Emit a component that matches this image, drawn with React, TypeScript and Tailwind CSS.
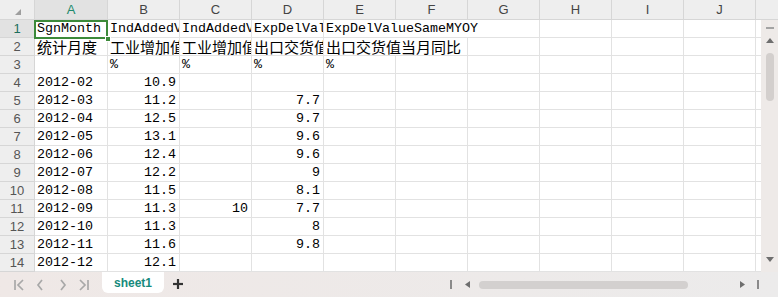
import React from "react";

type Cell = { t?: string; r?: boolean; cjk?: boolean; ov?: boolean; nb?: boolean };

const mono = { fontFamily: '"Liberation Mono", monospace' };

const rows: Cell[][] = [
  [
    { t: "SgnMonth" },
    { t: "IndAddedValueSameMYOY" },
    { t: "IndAddedValueAccumYOY" },
    { t: "ExpDelValueAccumYOY" },
    { t: "ExpDelValueSameMYOY", ov: true, nb: true },
    { nb: true },
    {}, {}, {}, {},
  ],
  [
    { t: "统计月度", cjk: true },
    { t: "工业增加值当月同比", cjk: true },
    { t: "工业增加值累计同比", cjk: true },
    { t: "出口交货值累计同比", cjk: true },
    { t: "出口交货值当月同比", cjk: true, ov: true, nb: true },
    {}, {}, {}, {}, {},
  ],
  [{}, { t: "%" }, { t: "%" }, { t: "%" }, { t: "%" }, {}, {}, {}, {}, {}],
];

const data: [string, string, string, string][] = [
  ["2012-02", "10.9", "", ""],
  ["2012-03", "11.2", "", "7.7"],
  ["2012-04", "12.5", "", "9.7"],
  ["2012-05", "13.1", "", "9.6"],
  ["2012-06", "12.4", "", "9.6"],
  ["2012-07", "12.2", "", "9"],
  ["2012-08", "11.5", "", "8.1"],
  ["2012-09", "11.3", "10", "7.7"],
  ["2012-10", "11.3", "", "8"],
  ["2012-11", "11.6", "", "9.8"],
  ["2012-12", "12.1", "", ""],
];

data.forEach(([a, b, c, d]) => {
  rows.push([
    { t: a },
    { t: b, r: true },
    { t: c, r: true },
    { t: d, r: true },
    {}, {}, {}, {}, {}, {},
  ]);
});

const cols = ["A", "B", "C", "D", "E", "F", "G", "H", "I", "J"];

function CellView({ c, first }: { c: Cell; first: boolean }) {
  const w = first ? "w-[73px]" : "w-[72px]";
  return (
    <div
      className={`${w} h-full shrink-0 border-b border-[#e2e2e2] ${
        c.nb ? "" : "border-r"
      } ${c.ov ? "relative z-10 overflow-visible" : "overflow-hidden"}`}
    >
      {c.t ? (
        <div
          className={`whitespace-nowrap text-black ${
            c.r ? "text-right pr-[3px]" : "pl-[2px]"
          } ${c.cjk ? "text-[15px] leading-[17px]" : "text-[13.33px] leading-[17px]"}`}
          style={
            c.cjk
              ? { fontFamily: '"Noto Sans CJK SC", sans-serif' }
              : mono
          }
        >
          {c.t}
        </div>
      ) : null}
    </div>
  );
}

function Tri({ up }: { up?: boolean }) {
  return (
    <svg width="8" height="5" viewBox="0 0 8 5">
      {up ? (
        <polygon points="4,0 8,5 0,5" fill="#6e6e6e" />
      ) : (
        <polygon points="0,0 8,0 4,5" fill="#6e6e6e" />
      )}
    </svg>
  );
}

export default function App() {
  const sans = { fontFamily: '"Liberation Sans", Arial, sans-serif' };
  return (
    <div className="w-[778px] h-[297px] bg-white overflow-hidden flex flex-col select-none" style={sans}>
      {/* column header */}
      <div className="flex h-[20px] shrink-0 bg-[#eeeeee] border-b border-[#d6d6d6]">
        <div className="w-[35px] shrink-0 border-r border-[#d6d6d6] relative">
          <svg className="absolute left-[15px] top-[9px]" width="6" height="6" viewBox="0 0 6 6">
            <polygon points="6,0 6,6 0,6" fill="#9e9e9e" />
          </svg>
        </div>
        {cols.map((c, i) => (
          <div
            key={c}
            className={`${i === 0 ? "w-[73px] bg-[#e2e2e2] text-[#1d8a6c]" : "w-[72px] text-[#444]"} shrink-0 border-r border-[#d6d6d6] flex items-center justify-center text-[13px]`}
          >
            {c}
          </div>
        ))}
        <div className="flex-1" />
      </div>

      {/* body */}
      <div className="flex h-[252px] shrink-0">
        <div className="w-[761px] shrink-0 relative">
          {rows.map((r, ri) => (
            <div key={ri} className="flex h-[18px]">
              <div
                className={`w-[35px] shrink-0 border-r border-b border-[#d6d6d6] flex items-center justify-center text-[13px] leading-none ${
                  ri === 0 ? "bg-[#e2e2e2] text-[#1d6f5c]" : "bg-[#eeeeee] text-[#555]"
                }`}
              >
                {ri + 1}
              </div>
              {r.map((c, ci) => (
                <CellView key={ci} c={c} first={ci === 0} />
              ))}
              <div className="flex-1 border-b border-[#e2e2e2]" />
            </div>
          ))}
          {/* selection */}
          <div className="absolute left-[34px] top-0 w-[74px] h-[19px] border-2 border-[#3c8a3a] z-20 pointer-events-none">
            <div className="absolute right-[-5px] bottom-[-5px] w-[6px] h-[6px] bg-[#3c8a3a] border border-white" />
          </div>
        </div>
        {/* vertical scrollbar */}
        <div className="w-[17px] shrink-0 bg-[#eeeae8] flex flex-col items-center pt-[7px] pb-[10px]">
          <div className="w-[8px] h-[2px] bg-[#a3a3a3]" />
          <div className="mt-[9px] flex">
            <Tri up />
          </div>
          <div className="mt-[10px] w-[8px] h-[48px] rounded-full bg-[#d3cfcd]" />
          <div className="flex-1" />
          <Tri />
        </div>
      </div>

      {/* bottom bar */}
      <div className="flex-1 flex bg-gradient-to-r from-[#efe8e6] to-[#ecebeb]">
        <div className="w-[102px] shrink-0 relative">
          <svg className="absolute left-[13px] top-[7px]" width="12" height="12" viewBox="0 0 12 12" fill="none" stroke="#a8a8a8" strokeWidth="1.7">
            <line x1="2" y1="1" x2="2" y2="11" />
            <polyline points="10,1 5,6 10,11" />
          </svg>
          <svg className="absolute left-[36px] top-[7px]" width="8" height="12" viewBox="0 0 8 12" fill="none" stroke="#a8a8a8" strokeWidth="1.7">
            <polyline points="6,1 2,6 6,11" />
          </svg>
          <svg className="absolute left-[59px] top-[7px]" width="8" height="12" viewBox="0 0 8 12" fill="none" stroke="#a8a8a8" strokeWidth="1.7">
            <polyline points="2,1 6,6 2,11" />
          </svg>
          <svg className="absolute left-[78px] top-[7px]" width="12" height="12" viewBox="0 0 12 12" fill="none" stroke="#a8a8a8" strokeWidth="1.7">
            <polyline points="2,1 7,6 2,11" />
            <line x1="10" y1="1" x2="10" y2="11" />
          </svg>
        </div>
        <div className="w-[62px] h-[21px] shrink-0 bg-white rounded-b-[6px] flex items-center justify-center text-[12px] font-bold text-[#168a7c]">
          sheet1
        </div>
        <div className="ml-[9px] flex items-center pb-[1px]">
          <svg width="10" height="10" viewBox="0 0 10 10" stroke="#333" strokeWidth="2.2">
            <line x1="5" y1="0" x2="5" y2="10" />
            <line x1="0" y1="5" x2="10" y2="5" />
          </svg>
        </div>
        <div className="flex-1" />
        <div className="w-[328px] shrink-0 flex items-center">
          <div className="w-[2px] h-[9px] bg-[#8a8a8a]" />
          <svg className="ml-[13px]" width="5" height="7" viewBox="0 0 5 7">
            <polygon points="5,0 5,7 0,3.5" fill="#6e6e6e" />
          </svg>
          <div className="ml-[9px] w-[209px] h-[8px] rounded-full bg-[#d3d0cf]" />
          <svg className="ml-[52px]" width="5" height="7" viewBox="0 0 5 7">
            <polygon points="0,0 0,7 5,3.5" fill="#6e6e6e" />
          </svg>
          <div className="ml-[12px] w-[2px] h-[9px] bg-[#8a8a8a]" />
        </div>
      </div>
    </div>
  );
}
